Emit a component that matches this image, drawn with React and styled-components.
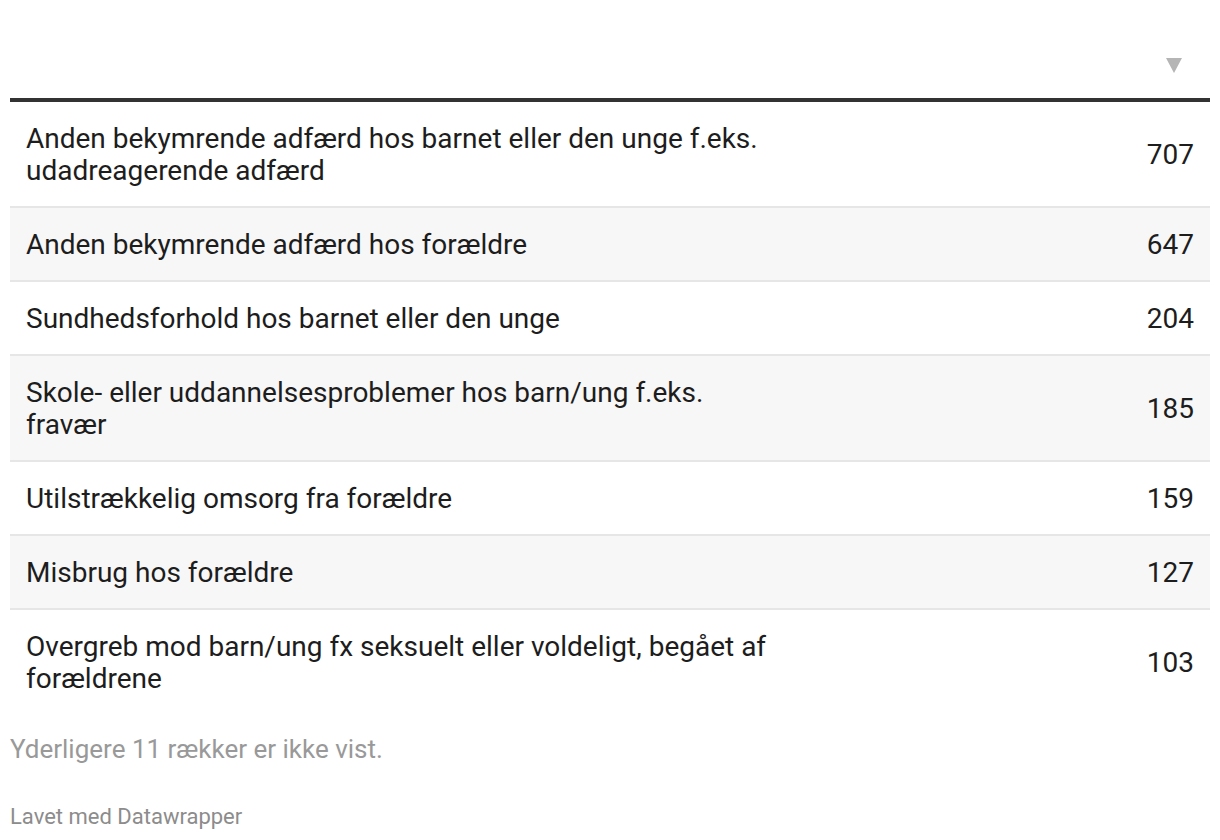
import React from "react";
import styled, { createGlobalStyle } from "styled-components";

const GlobalStyle = createGlobalStyle`
  body {
    margin: 0;
    background: #ffffff;
    font-family: Roboto, "Liberation Sans", Arial, sans-serif;
  }
`;

const Wrapper = styled.div`
  width: 1200px;
  padding: 0 10px;
`;

const Table = styled.div`
  display: flex;
  flex-direction: column;
`;

const HeaderRow = styled.div`
  display: flex;
  justify-content: flex-end;
  align-items: flex-end;
  height: 102px;
  border-bottom: 4px solid #333333;
  box-sizing: border-box;
  padding: 0 28px 25px 0;
`;

const SortArrow = styled.div`
  width: 0;
  height: 0;
  border-left: 8px solid transparent;
  border-right: 8px solid transparent;
  border-top: 15px solid #b5b5b5;
`;

const Row = styled.div`
  display: flex;
  align-items: center;
  justify-content: space-between;
  padding: 21px 16px 19px;
  background: ${(p) => (p.$shaded ? "#f7f7f7" : "#ffffff")};
  border-bottom: 2px solid ${(p) => (p.$last ? "transparent" : "#e6e6e6")};
  font-size: 28px;
  line-height: 32px;
  color: #1d1d1d;
`;

const Label = styled.div`
  width: 750px;
`;

const Value = styled.div`
  text-align: right;
`;

const Note = styled.div`
  margin-top: 18px;
  font-size: 26px;
  line-height: 30px;
  color: #999999;
`;

const Credit = styled.div`
  margin-top: 40px;
  font-size: 22px;
  line-height: 26px;
  color: #8c8c8c;
`;

const rows = [
  ["Anden bekymrende adfærd hos barnet eller den unge f.eks. udadreagerende adfærd", 707],
  ["Anden bekymrende adfærd hos forældre", 647],
  ["Sundhedsforhold hos barnet eller den unge", 204],
  ["Skole- eller uddannelsesproblemer hos barn/ung f.eks. fravær", 185],
  ["Utilstrækkelig omsorg fra forældre", 159],
  ["Misbrug hos forældre", 127],
  ["Overgreb mod barn/ung fx seksuelt eller voldeligt, begået af forældrene", 103],
];

export default function App() {
  return (
    <Wrapper>
      <GlobalStyle />
      <Table>
        <HeaderRow>
          <SortArrow />
        </HeaderRow>
        {rows.map(([label, value], i) => (
          <Row key={label} $shaded={i % 2 === 1} $last={i === rows.length - 1}>
            <Label>{label}</Label>
            <Value>{value}</Value>
          </Row>
        ))}
      </Table>
      <Note>Yderligere 11 rækker er ikke vist.</Note>
      <Credit>Lavet med Datawrapper</Credit>
    </Wrapper>
  );
}
